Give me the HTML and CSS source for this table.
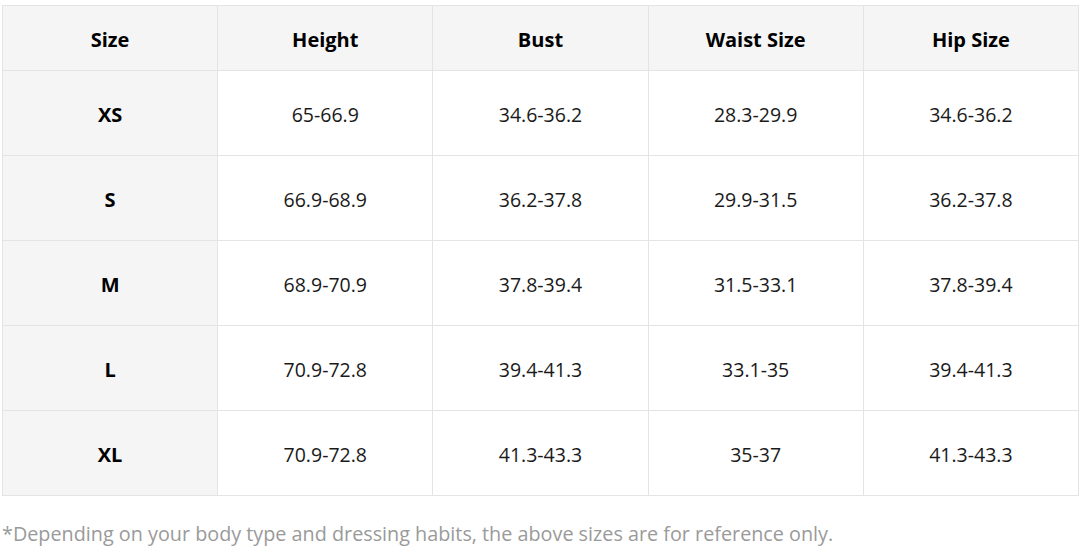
FILE: index.html
```html
<!DOCTYPE html>
<html>
<head>
<meta charset="utf-8">
<link rel="stylesheet" href="styles.css">
</head>
<body>
<div class="wrap">
  <table class="chart">
    <thead>
      <tr><th>Size</th><th>Height</th><th>Bust</th><th>Waist Size</th><th>Hip Size</th></tr>
    </thead>
    <tbody>
      <tr><th>XS</th><td>65-66.9</td><td>34.6-36.2</td><td>28.3-29.9</td><td>34.6-36.2</td></tr>
      <tr><th>S</th><td>66.9-68.9</td><td>36.2-37.8</td><td>29.9-31.5</td><td>36.2-37.8</td></tr>
      <tr><th>M</th><td>68.9-70.9</td><td>37.8-39.4</td><td>31.5-33.1</td><td>37.8-39.4</td></tr>
      <tr><th>L</th><td>70.9-72.8</td><td>39.4-41.3</td><td>33.1-35</td><td>39.4-41.3</td></tr>
      <tr><th>XL</th><td>70.9-72.8</td><td>41.3-43.3</td><td>35-37</td><td>41.3-43.3</td></tr>
    </tbody>
  </table>
  <p class="note">*Depending on your body type and dressing habits, the above sizes are for reference only.</p>
</div>
</body>
</html>
```
FILE: styles.css
```css
html, body {
  margin: 0;
  padding: 0;
  background: #ffffff;
}
.wrap {
  padding: 5px 5px 0 2px;
  font-family: "Open Sans", "Noto Sans", sans-serif;
  color: #000000;
}
.chart {
  width: 1077px;
  border-collapse: collapse;
  table-layout: fixed;
}
.chart th, .chart td {
  border: 1px solid #e4e4e4;
  text-align: center;
  vertical-align: middle;
  padding: 3px 0 0 0;
  line-height: 1.2;
}
.chart th {
  font-size: 20px;
  font-weight: 700;
  color: #000000;
}
.chart thead th {
  height: 61px;
  background: #f5f5f5;
}
.chart tbody th {
  background: #f5f5f5;
}
.chart tbody td, .chart tbody th {
  height: 81px;
}
.chart td {
  font-size: 19.5px;
  font-weight: 400;
  color: #1a1a1a;
}
.note {
  margin: 25px 0 0 0;
  font-size: 19.8px;
  line-height: 1.3;
  color: #9a9a9a;
}
```
